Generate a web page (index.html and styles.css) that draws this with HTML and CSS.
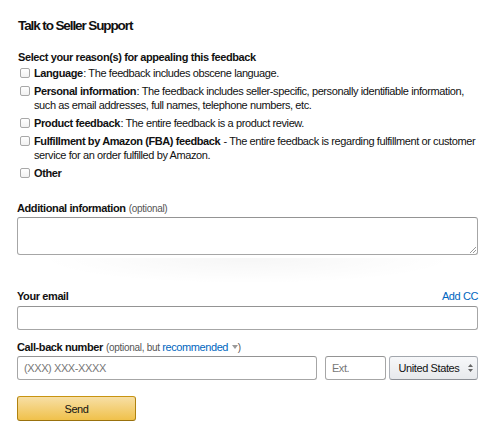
FILE: index.html
```html
<!DOCTYPE html>
<html>
<head>
<meta charset="utf-8">
<link rel="stylesheet" href="styles.css">
</head>
<body>
<div class="page">
  <h1 class="title">Talk to Seller Support</h1>
  <div class="reasons">
    <div class="section-label">Select your reason(s) for appealing this feedback</div>
    <label class="opt"><span class="cb"></span><span class="opt-text"><b>Language</b>: The feedback includes obscene language.</span></label>
    <label class="opt"><span class="cb"></span><span class="opt-text"><b>Personal information</b>: The feedback includes seller-specific, personally identifiable information, such as email addresses, full names, telephone numbers, etc.</span></label>
    <label class="opt"><span class="cb"></span><span class="opt-text"><b>Product feedback</b>: The entire feedback is a product review.</span></label>
    <label class="opt"><span class="cb"></span><span class="opt-text"><b>Fulfillment by Amazon (FBA) feedback</b> - The entire feedback is regarding fulfillment or customer service for an order fulfilled by Amazon.</span></label>
    <label class="opt"><span class="cb"></span><span class="opt-text"><b>Other</b></span></label>
  </div>

  <div class="field field-info">
    <div class="label"><b>Additional information</b> <span class="muted">(optional)</span></div>
    <div class="textarea"><span class="grip"></span></div>
  </div>

  <div class="divider"></div>

  <div class="field">
    <div class="label row-between"><b>Your email</b><a class="link">Add CC</a></div>
    <div class="input"></div>
  </div>

  <div class="field field-phone">
    <div class="label"><b>Call-back number</b> <span class="muted">(optional, but </span><a class="link">recommended <span class="caret"></span></a><span class="muted">)</span></div>
    <div class="phone-row">
      <div class="input phone"><span class="ph">(XXX) XXX-XXXX</span></div>
      <div class="input ext"><span class="ph">Ext.</span></div>
      <div class="select">United States
        <svg class="updown" width="5" height="8" viewBox="0 0 5 8"><path d="M2.5 0 L5 3 L0 3 Z M0 5 L5 5 L2.5 8 Z" fill="#666"/></svg>
      </div>
    </div>
  </div>

  <div class="btn">Send</div>
</div>
</body>
</html>
```
FILE: styles.css
```css
* { box-sizing: border-box; }
body {
  margin: 0;
  background: #fff;
  font-family: "Liberation Sans", Arial, sans-serif;
  color: #111;
  font-size: 11px;
  letter-spacing: -0.4px;
}
b { margin-right: 0.5px; }
.page {
  padding: 17px 24px 0 17px;
  width: 502px;
}
.title {
  margin: 0 0 0 1px;
  font-size: 13.5px;
  letter-spacing: -1.1px;
  font-weight: bold;
  line-height: 18px;
}
.reasons {
  margin-top: 15px;
  padding-left: 1px;
}
.section-label {
  font-weight: bold;
  line-height: 14px;
  margin-bottom: 2px;
}
.opt {
  display: flex;
  align-items: flex-start;
  line-height: 14px;
  margin-bottom: 4px;
}
.cb {
  flex: none;
  width: 10px;
  height: 10px;
  margin: 2px 4px 0 2px;
  border: 1px solid #a8a8a8;
  border-radius: 2px;
  background: linear-gradient(#fff, #f1f1f1);
}
.opt-text { flex: 1; }
.field-info { margin-top: 21px; }
.label {
  height: 14px;
  line-height: 14px;
  margin-bottom: 2px;
}
.muted { color: #555; font-size: 10px; letter-spacing: -0.3px; }
.row-between {
  display: flex;
  justify-content: space-between;
  margin-bottom: 3px;
}
.link { color: #0066c0; }
.caret {
  display: inline-block;
  width: 0; height: 0;
  border-left: 3px solid transparent;
  border-right: 3px solid transparent;
  border-top: 4px solid #999;
  vertical-align: 2px;
  margin-left: 1px;
}
.textarea {
  position: relative;
  height: 38px;
  border: 1px solid #a6a6a6;
  border-top-color: #949494;
  border-radius: 3px;
}
.grip {
  position: absolute;
  right: 1px; bottom: 1px;
  width: 6px; height: 6px;
  background: linear-gradient(135deg, transparent 45%, #999 46%, #999 54%, transparent 55%, transparent 70%, #999 71%, #999 79%, transparent 80%);
}
.divider {
  height: 26px;
  margin: 3px 20px 5px;
  background: radial-gradient(ellipse at 50% 0, rgba(0,0,0,0.035) 0, rgba(0,0,0,0) 70%);
}
.input {
  height: 24px;
  border: 1px solid #a6a6a6;
  border-top-color: #949494;
  border-radius: 3px;
  display: flex;
  align-items: center;
  padding-left: 6px;
}
.field-phone { margin-top: 10px; }
.field-phone .label { margin-bottom: 2px; }
.phone-row {
  display: flex;
}
.phone { width: 302px; }
.ext { width: 61px; margin-left: 8px; }
.select {
  margin-left: 3px;
  width: 90px;
  height: 24px;
  border: 1px solid #adb1b8;
  border-top-color: #a2a6ac;
  border-bottom-color: #8d9096;
  border-radius: 3px;
  background: linear-gradient(#f7f8fa, #e7e9ec);
  display: flex;
  align-items: center;
  padding-left: 9px;
  color: #111;
}
.updown { margin-left: 9px; }
.ph { color: #777; }
.btn {
  margin-top: 16px;
  width: 119px;
  height: 25px;
  border: 1px solid #a88734;
  border-color: #c89411 #b0820f #99710d;
  border-radius: 3px;
  background: linear-gradient(#f7dfa5, #f0c14b);
  display: flex;
  align-items: center;
  justify-content: center;
  color: #111;
}
```
